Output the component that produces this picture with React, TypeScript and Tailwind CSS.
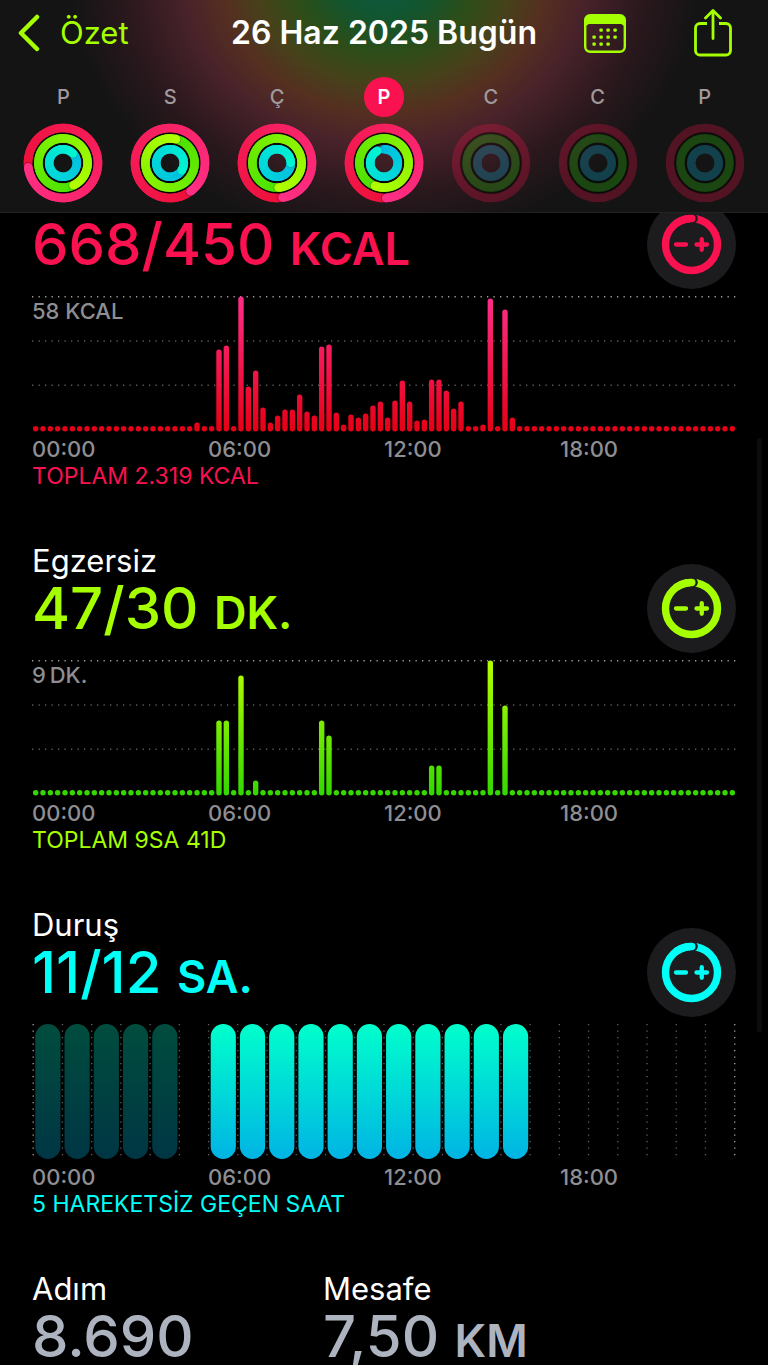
import { useId } from "react";

type Tone = "move" | "exercise" | "stand";

interface RingProgress {
  // Toplam tur sayısı, 1 = halka tamamlandı
  move: number;
  exercise: number;
  stand: number;
}

interface Day {
  letter: string;
  today?: boolean;
  rings?: RingProgress;
}

const days: Day[] = [
  { letter: "P", rings: { move: 1.73, exercise: 1.43, stand: 1.13 } },
  { letter: "S", rings: { move: 1.4, exercise: 2.04, stand: 1.34 } },
  { letter: "Ç", rings: { move: 1.475, exercise: 1.49, stand: 1.25 } },
  { letter: "P", today: true, rings: { move: 1.49, exercise: 1.56, stand: 0.92 } },
  { letter: "C" },
  { letter: "C" },
  { letter: "P" },
];

const ringColors: Record<Tone, { from: number[]; to: number[]; dim: string; radius: number }> = {
  move: { from: [236, 12, 48], to: [255, 48, 136], dim: "#fa114f", radius: 35 },
  exercise: { from: [60, 222, 0], to: [180, 255, 0], dim: "#30d010", radius: 24.6 },
  stand: { from: [0, 184, 226], to: [0, 246, 210], dim: "#10b8e0", radius: 13.8 },
};

const textColors: Record<Tone, string> = {
  move: "text-[#fa114f]",
  exercise: "text-[#a6ff00]",
  stand: "text-[#00fff6]",
};

const barGradients: Record<Tone, [string, string]> = {
  move: ["#ff2e8a", "#e60014"],
  exercise: ["#b8ff00", "#32d700"],
  stand: ["#00ffcc", "#00b4e4"],
};

const SLOT_COUNT = 96;
const CHART_WIDTH = 704;
const CHART_HEIGHT = 136;

// Çeyrek saatlik dilimler, yalnızca boş olmayanlar
const moveBars: Record<number, number> = {
  22: 9, 25: 82, 26: 86, 28: 135, 29: 45, 30: 61, 31: 24, 32: 9, 33: 16, 34: 22, 35: 22,
  36: 37, 37: 20, 38: 16, 39: 85, 40: 87, 41: 19, 42: 7, 43: 17, 44: 14, 45: 18, 46: 26,
  47: 30, 48: 14, 49: 31, 50: 51, 51: 30, 52: 11, 53: 12, 54: 52, 55: 52, 56: 41, 57: 23,
  58: 30, 61: 7, 62: 133, 64: 122, 65: 14,
};

const exerciseBars: Record<number, number> = {
  25: 75, 26: 75, 28: 120, 30: 15, 39: 75, 40: 60, 54: 30, 55: 30, 62: 135, 64: 90,
};

const standHours = Array.from({ length: 17 }, (_, hour) => hour).filter((hour) => hour !== 5);

const polar = (radius: number, turns: number) => {
  const angle = turns * Math.PI * 2 - Math.PI / 2;
  return [40 + radius * Math.cos(angle), 40 + radius * Math.sin(angle)];
};

const mix = (from: number[], to: number[], t: number) =>
  `rgb(${from.map((c, i) => Math.round(c + (to[i] - c) * t)).join(",")})`;

function Ring({ tone, progress }: { tone: Tone; progress?: number }) {
  const { from, to, dim, radius } = ringColors[tone];

  if (progress === undefined) {
    return <circle cx="40" cy="40" r={radius} fill="none" stroke={dim} strokeWidth="8.6" opacity="0.27" />;
  }

  const start = Math.max(0, progress - 1);
  const steps = 60;
  const span = progress - start;
  const [tipX, tipY] = polar(radius, progress);
  const [shadowX, shadowY] = polar(radius, progress + 0.006);
  const [startX, startY] = polar(radius, start);

  return (
    <g>
      {progress < 1 && (
        <>
          <circle cx="40" cy="40" r={radius} fill="none" stroke={dim} strokeWidth="8.6" opacity="0.2" />
          <circle cx={startX} cy={startY} r="4.3" fill={mix(from, to, 0)} />
        </>
      )}
      {Array.from({ length: steps }, (_, i) => {
        // Dilimler arasında ek yeri görünmesin diye biraz üst üste biniyorlar
        const a = start + (span * i) / steps;
        const b = Math.min(progress, start + (span * (i + 2)) / steps);
        const [x1, y1] = polar(radius, a);
        const [x2, y2] = polar(radius, b);
        return (
          <path
            key={i}
            d={`M${x1} ${y1}A${radius} ${radius} 0 0 1 ${x2} ${y2}`}
            fill="none"
            stroke={mix(from, to, (i / steps) * 0.85 + 0.12)}
            strokeWidth="8.6"
          />
        );
      })}
      <circle cx={shadowX} cy={shadowY} r="4.3" fill="#000" opacity="0.22" />
      <circle cx={tipX} cy={tipY} r="4.3" fill={mix(from, to, 0.97)} />
    </g>
  );
}

function ActivityRings({ rings }: { rings?: RingProgress }) {
  return (
    <svg viewBox="0 0 80 80" className="size-20" aria-hidden="true">
      <g fill="none" stroke="#000" strokeWidth="3" opacity={rings ? 0.75 : 0.4}>
        <circle cx="40" cy="40" r="29.8" />
        <circle cx="40" cy="40" r="19.2" />
      </g>
      <Ring tone="move" progress={rings?.move} />
      <Ring tone="exercise" progress={rings?.exercise} />
      <Ring tone="stand" progress={rings?.stand} />
    </svg>
  );
}

function BackIcon() {
  return (
    <svg width="22" height="40" viewBox="0 0 22 40" fill="none" aria-hidden="true">
      <path d="M19 4 3 20l16 16" stroke="currentColor" strokeWidth="4.5" strokeLinecap="round" strokeLinejoin="round" />
    </svg>
  );
}

function CalendarIcon() {
  const dots = [
    [17, 15], [24, 15], [31, 15],
    [10, 22], [17, 22], [24, 22], [31, 22],
    [10, 29], [17, 29], [24, 29],
  ];
  return (
    <svg width="42" height="39" viewBox="0 0 42 39" fill="none" aria-hidden="true">
      <rect x="1.2" y="1.2" width="39.6" height="36.6" rx="5" stroke="currentColor" strokeWidth="2.4" />
      <path d="M1 6a5 5 0 0 1 5-5h30a5 5 0 0 1 5 5v5.5H39a3 3 0 0 0-2-1.5H5a3 3 0 0 0-2 1.5H1z" fill="currentColor" />
      {dots.map(([x, y]) => (
        <rect key={`${x}-${y}`} x={x - 1.6} y={y - 0.6} width="3.4" height="3.4" rx="1" fill="currentColor" />
      ))}
    </svg>
  );
}

function ShareIcon() {
  return (
    <svg width="38" height="48" viewBox="0 0 38 48" fill="none" aria-hidden="true">
      <path
        d="M13 14.500H6a4.500 4.500 0 0 0-4.500 4.500v22.500A4.500 4.500 0 0 0 6 46h26a4.500 4.500 0 0 0 4.500-4.500V19a4.500 4.500 0 0 0-4.500-4.500h-7"
        stroke="currentColor"
        strokeWidth="2.8"
      />
      <path
        d="M19 29.500V2M11.500 9 19 1.500 26.500 9"
        stroke="currentColor"
        strokeWidth="2.8"
        strokeLinecap="round"
        strokeLinejoin="round"
      />
    </svg>
  );
}

function GoalIcon() {
  return (
    <svg viewBox="0 0 89 89" className="size-full" fill="none" stroke="currentColor" strokeLinecap="round" aria-hidden="true">
      <circle cx="44.5" cy="44.5" r="26" strokeWidth="7.4" />
      <circle cx="46" cy="18.5" r="4.8" fill="#1c1c1e" stroke="none" />
      <path d="M30 22.92A26 26 0 0 1 44.8 18.5" strokeWidth="7.4" />
      <path d="M29 44.5h10M49.5 44.5H60M54.75 39.25v10.5" strokeWidth="4.3" />
    </svg>
  );
}

function BarChart({ tone, bars }: { tone: Tone; bars: Record<number, number> }) {
  const id = useId();
  const slot = CHART_WIDTH / SLOT_COUNT;
  const [top, bottom] = barGradients[tone];

  return (
    <svg viewBox={`0 0 ${CHART_WIDTH} ${CHART_HEIGHT}`} className="block w-full" aria-hidden="true">
      <defs>
        <linearGradient id={id} gradientUnits="userSpaceOnUse" x1="0" y1="0" x2="0" y2={CHART_HEIGHT}>
          <stop offset="0" stopColor={top} />
          <stop offset="1" stopColor={bottom} />
        </linearGradient>
      </defs>
      {[0.75, 45, 89.25].map((y, i) => (
        <line
          key={y}
          x1="0"
          x2={CHART_WIDTH}
          y1={y}
          y2={y}
          stroke={i === 0 ? "#a0a09a" : "#5c5c58"}
          strokeWidth="1.3"
          strokeDasharray="1.3 5.2"
        />
      ))}
      {Array.from({ length: SLOT_COUNT }, (_, i) => {
        const height = bars[i] ?? 5.6;
        return (
          <rect
            key={i}
            x={i * slot + slot / 2 - 2.7}
            y={CHART_HEIGHT - height - 0.5}
            width="5.4"
            height={height}
            rx="2.7"
            fill={`url(#${id})`}
          />
        );
      })}
    </svg>
  );
}

function StandChart() {
  const id = useId();
  const [top, bottom] = barGradients.stand;
  const slot = 29.23;

  return (
    <svg viewBox={`0 0 ${CHART_WIDTH} ${CHART_HEIGHT}`} className="block w-full" aria-hidden="true">
      <defs>
        <linearGradient id={id} x1="0" y1="0" x2="0" y2="1">
          <stop offset="0" stopColor={top} />
          <stop offset="1" stopColor={bottom} />
        </linearGradient>
      </defs>
      {Array.from({ length: 25 }, (_, i) => (
        <line
          key={i}
          x1={1.2 + i * slot}
          x2={1.2 + i * slot}
          y1="0"
          y2="133"
          stroke={i === 0 || i === 24 ? "#a8a8a0" : "#62625e"}
          strokeWidth="1.3"
          strokeDasharray="1.3 5.2"
        />
      ))}
      {standHours.map((hour) => (
        <rect
          key={hour}
          x={3.3 + hour * slot}
          y="0"
          width="25.2"
          height="135"
          rx="12.6"
          fill={`url(#${id})`}
          opacity={hour < 5 ? 0.3 : 1}
        />
      ))}
    </svg>
  );
}

interface MetricProps {
  tone: Tone;
  name: string;
  title?: string;
  value: string;
  unit: string;
  peak?: string;
  footer: string;
  children: React.ReactNode;
}

function Metric({ tone, name, title, value, unit, peak, footer, children }: MetricProps) {
  return (
    <section className="pb-[53px]">
      <div className="flex items-end justify-between">
        <div className="pb-4">
          {title && <h2 className="text-[31px] leading-9">{title}</h2>}
          <p className={`text-[58px] leading-[58px] font-medium ${textColors[tone]}`}>
            {value} <span className="text-[45px] leading-none font-semibold">{unit}</span>
          </p>
        </div>
        <button
          type="button"
          aria-label={`${name} hedefini değiştir`}
          className={`size-[89px] shrink-0 rounded-full bg-[#1c1c1e] ${textColors[tone]}`}
        >
          <GoalIcon />
        </button>
      </div>
      <div className="relative mt-[7px]">
        {children}
        {peak && (
          <span className="absolute top-0.5 left-0 text-[22px] leading-[26px] font-medium text-[#8e8e93]">{peak}</span>
        )}
      </div>
      <div className="mt-1 grid grid-cols-4 text-[22px] leading-[26px] font-medium text-[#8e8e93]">
        <span>00:00</span>
        <span>06:00</span>
        <span>12:00</span>
        <span>18:00</span>
      </div>
      <p className={`text-[23px] leading-7 ${textColors[tone]}`}>{footer}</p>
    </section>
  );
}

export default function App() {
  return (
    <div className="relative flex h-screen flex-col overflow-hidden bg-black font-['Inter',sans-serif] text-white">
      <header className="z-10 shrink-0 border-b border-[#232323] bg-[#141414] bg-[radial-gradient(315px_260px_at_50%_-20px,#0c5a44_0%,#12552f_15%,#2c4d18_28%,#45431a_39%,#552f20_51%,#48222a_64%,#2a181d_82%,#141414_100%)]">
        <nav className="grid h-[66px] grid-cols-[1fr_auto_1fr] items-center px-[18px]">
          <a href="#ozet" className="flex items-center gap-5 text-[31px] leading-9 text-[#a6ff00]">
            <BackIcon />
            Özet
          </a>
          <h1 className="text-[32px] leading-9 font-semibold">26 Haz 2025 Bugün</h1>
          <div className="mr-[18px] flex items-center justify-end gap-[68px] text-[#a6ff00]">
            <button type="button" aria-label="Takvim">
              <CalendarIcon />
            </button>
            <button type="button" aria-label="Paylaş">
              <ShareIcon />
            </button>
          </div>
        </nav>
        <ol className="grid grid-cols-7 px-2.5 pt-[11px] pb-[9px]">
          {days.map((day, i) => (
            <li key={i} className="flex flex-col items-center gap-1.5">
              <span
                className={
                  day.today
                    ? "flex size-10 items-center justify-center rounded-full bg-[#fa114f] text-xl font-semibold"
                    : "flex size-10 items-center justify-center text-xl font-medium text-[#a19a9d]"
                }
              >
                {day.letter}
              </span>
              <ActivityRings rings={day.rings} />
            </li>
          ))}
        </ol>
      </header>

      <main className="min-h-0 flex-1 overflow-y-auto px-8 [scrollbar-width:none]">
        <div className="-mt-[13px]">
          <Metric tone="move" name="Hareket" value="668/450" unit="KCAL" peak="58 KCAL" footer="TOPLAM 2.319 KCAL">
            <BarChart tone="move" bars={moveBars} />
          </Metric>
          <Metric tone="exercise" name="Egzersiz" title="Egzersiz" value="47/30" unit="DK." peak={"9\u2009DK."} footer="TOPLAM 9SA 41D">
            <BarChart tone="exercise" bars={exerciseBars} />
          </Metric>
          <Metric tone="stand" name="Duruş" title="Duruş" value="11/12" unit="SA." footer="5 HAREKETSİZ GEÇEN SAAT">
            <StandChart />
          </Metric>
          <dl className="grid grid-cols-[291px_1fr]">
            <div>
              <dt className="text-[31px] leading-9">Adım</dt>
              <dd className="text-[58px] leading-[58px] font-medium text-[#aeb3c0]">8.690</dd>
            </div>
            <div>
              <dt className="text-[31px] leading-9">Mesafe</dt>
              <dd className="text-[58px] leading-[58px] font-medium text-[#aeb3c0]">
                7,50 <span className="text-[45px] leading-none font-semibold">KM</span>
              </dd>
            </div>
          </dl>
        </div>
      </main>

      <div className="absolute top-[438px] right-1.5 h-[594px] w-[5px] rounded-full bg-[#0c0c0c]" />
    </div>
  );
}
